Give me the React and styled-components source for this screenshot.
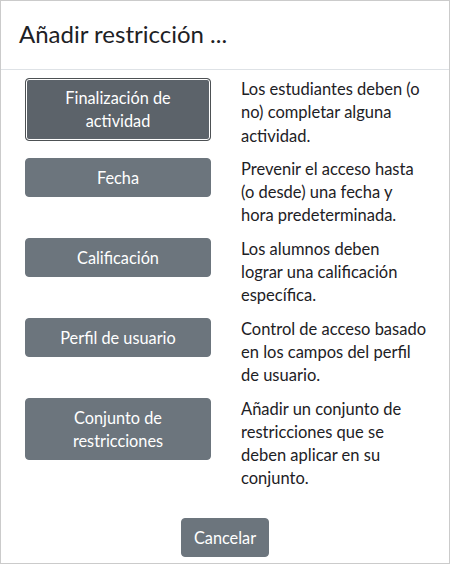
import React from "react";
import styled, { createGlobalStyle } from "styled-components";

const restricciones = [
	{
		label: "Finalización de\nactividad",
		desc: "Los estudiantes deben (o\nno) completar alguna\nactividad.",
		focused: true,
	},
	{
		label: "Fecha",
		desc: "Prevenir el acceso hasta\n(o desde) una fecha y\nhora predeterminada.",
	},
	{
		label: "Calificación",
		desc: "Los alumnos deben\nlograr una calificación\nespecífica.",
	},
	{
		label: "Perfil de usuario",
		desc: "Control de acceso basado\nen los campos del perfil\nde usuario.",
	},
	{
		label: "Conjunto de\nrestricciones",
		desc: "Añadir un conjunto de\nrestricciones que se\ndeben aplicar en su\nconjunto.",
	},
];

const GlobalStyle = createGlobalStyle`
	html, body {
		margin: 0;
		padding: 0;
		background: #fff;
	}
	body {
		font-family: Lato, "Noto Sans", sans-serif;
		color: #1d2125;
	}
`;

const App = () => {
	return (
		<>
			<GlobalStyle />
			<Modal>
				<Header>
					<Title>Añadir restricción ...</Title>
				</Header>
				<Body>
					{restricciones.map((r) => (
						<Row key={r.label}>
							<Button $focused={r.focused}>{r.label}</Button>
							<Desc>{r.desc}</Desc>
						</Row>
					))}
				</Body>
				<Footer>
					<Button>Cancelar</Button>
				</Footer>
			</Modal>
		</>
	);
};

const Modal = styled.div`
	width: 450px;
	box-sizing: border-box;
	border: 1px solid #cbcbcb;
	background: #fff;
	display: flex;
	flex-direction: column;
`;

const Header = styled.div`
	padding: 18px 18px 21px;
	border-bottom: 1px solid #dee2e6;
`;

const Title = styled.h5`
	margin: 0;
	font-size: 24px;
	font-weight: 400;
	line-height: 29px;
	color: #1d2125;
`;

const Body = styled.div`
	padding: 8px 10px 0 24px;
	display: flex;
	flex-direction: column;
	gap: 10px;
`;

const Row = styled.div`
	display: grid;
	grid-template-columns: 186px 1fr;
	column-gap: 30px;
	align-items: start;
`;

const Button = styled.button`
	font-family: inherit;
	font-size: 16.3px;
	line-height: 23.3px;
	white-space: pre-line;
	text-align: center;
	color: #fff;
	background: ${(p) => (p.$focused ? "#5c636a" : "#6c757d")};
	border: 1px solid ${(p) => (p.$focused ? "#4d5154" : "#6c757d")};
	box-shadow: ${(p) => (p.$focused ? "inset 0 0 0 1px #fff" : "none")};
	border-radius: 4px;
	padding: 7px 12px;
	cursor: pointer;
`;

const Desc = styled.p`
	margin: 0;
	font-size: 16.5px;
	line-height: 23.3px;
	white-space: pre-line;
`;

const Footer = styled.div`
	display: flex;
	justify-content: center;
	padding: 27px 0 6px;
`;

export default App;
